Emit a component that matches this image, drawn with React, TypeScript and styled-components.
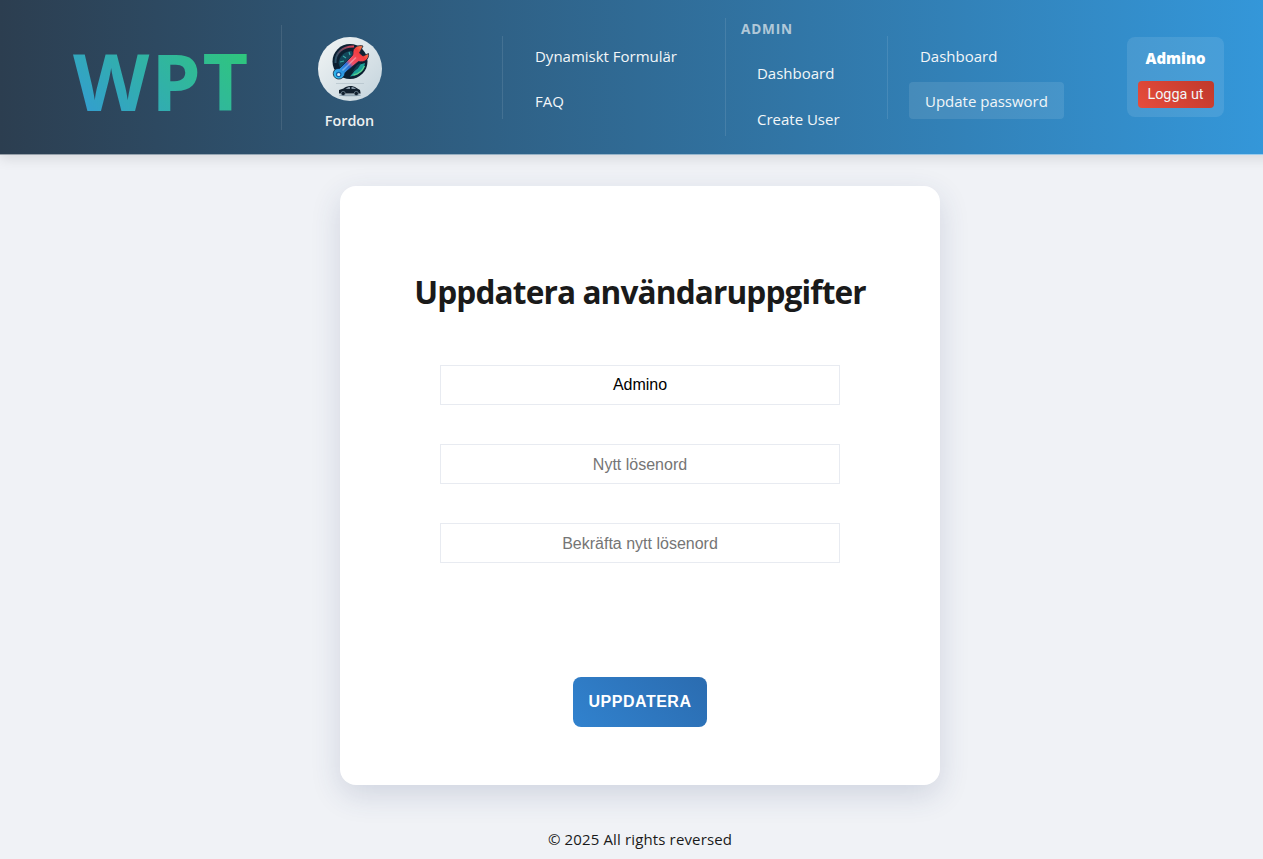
import React from 'react';
import styled, { createGlobalStyle } from 'styled-components';

const GlobalStyle = createGlobalStyle`
  * { box-sizing: border-box; }
  html { overflow: hidden; }
  body {
    margin: 0;
    background: #f0f2f6;
    color: #1a1a1a;
    font-family: 'Segoe UI', 'Open Sans', 'Noto Sans', sans-serif;
  }
`;

const Page = styled.div`
  width: 1280px;
  height: 859px;
  display: flex;
  flex-direction: column;
  align-items: center;
  overflow: hidden;
`;

const Header = styled.header`
  width: 100%;
  height: 155px;
  flex: none;
  display: flex;
  align-items: center;
  background: linear-gradient(90deg, #2c3e50, #3498db);
  border-bottom: 1px solid rgba(255, 255, 255, 0.5);
  box-shadow: 0 4px 12px rgba(0, 0, 0, 0.1);
`;

const Brand = styled.div`
  width: 281px;
  padding: 7px 0 0 73px;
`;

const Logo = styled.span`
  display: inline-block;
  background: linear-gradient(45deg, #3498db, #2ecc71);
  background-clip: text;
  -webkit-background-clip: text;
  color: transparent;
  font-size: 79px;
  font-weight: 700;
  line-height: 107px;
  letter-spacing: 1.8px;
`;

const Section = styled.nav<{ $width: number; $height: number }>`
  width: ${(p) => p.$width}px;
  height: ${(p) => p.$height}px;
  padding-left: 16px;
  border-left: 1px solid rgba(255, 255, 255, 0.1);
  display: flex;
  flex-direction: column;
  align-items: flex-start;
`;

const VehicleLink = styled.a`
  display: flex;
  flex-direction: column;
  align-items: center;
  width: 64px;
  margin: 12px 0 0 19.5px;
  color: #ecf0f1;
  font-size: 14.4px;
  font-weight: 600;
  line-height: 22px;
`;

const VehicleArt = styled.svg`
  width: 64px;
  height: 64px;
  margin-bottom: 9px;
  border-radius: 50%;
`;

const NavLink = styled.a<{ $active?: boolean }>`
  height: 37px;
  flex: none;
  padding: 0 16px;
  border-radius: 4px;
  margin-bottom: 8px;
  color: #f2f6f8;
  font-size: 15px;
  line-height: 39px;
  letter-spacing: -0.01px;
  white-space: nowrap;
  background: ${(p) => (p.$active ? 'rgba(255, 255, 255, 0.1)' : 'transparent')};
  transform: ${(p) => (p.$active ? 'translateX(5px)' : 'none')};
`;

const LinkList = styled.div`
  flex: none;
  padding-top: 1px;
  display: flex;
  flex-direction: column;
  align-items: flex-start;
`;

const SectionTitle = styled.span`
  height: 35px;
  flex: none;
  margin-left: -1px;
  color: rgba(236, 240, 241, 0.7);
  font-size: 13.6px;
  font-weight: 700;
  line-height: 22px;
  letter-spacing: 0.8px;
`;

const AdminList = styled(LinkList)`
  margin-left: -1px;
  gap: 1px;
`;

const UserPanel = styled.div`
  width: 97px;
  height: 80px;
  margin-left: 77px;
  padding-top: 10px;
  border-radius: 8px;
  background: rgba(255, 255, 255, 0.1);
  display: flex;
  flex-direction: column;
  align-items: center;
`;

const UserName = styled.strong`
  height: 34px;
  color: #fff;
  font-size: 15px;
  font-weight: 800;
  line-height: 23px;
`;

const LogoutButton = styled.button`
  width: 76px;
  height: 27px;
  padding: 0;
  border: 0;
  border-radius: 4px;
  background: linear-gradient(45deg, #e74c3c, #c0392b);
  color: #f2f6f8;
  font: 400 14.4px/27px Roboto, 'Liberation Sans', sans-serif;
`;

const Card = styled.main`
  width: 600px;
  height: 599px;
  flex: none;
  margin-top: 31px;
  padding-top: 79px;
  border-radius: 16px;
  background: #fff;
  box-shadow: 0 10px 30px rgba(45, 65, 110, 0.16);
  display: flex;
  flex-direction: column;
  align-items: center;
`;

const Title = styled.h1`
  margin: 0 0 46px;
  font-size: 31.6px;
  font-weight: 700;
  line-height: 54px;
  white-space: nowrap;
  letter-spacing: -0.88px;
`;

const Form = styled.form`
  width: 400px;
  display: flex;
  flex-direction: column;
  align-items: center;
  gap: 39px;
`;

const Field = styled.input`
  width: 400px;
  height: 40px;
  padding: 0;
  border: 1px solid #e8ebf1;
  background: #fff;
  color: #000;
  font: 16px 'Liberation Sans', Arial, sans-serif;
  text-align: center;
  &::placeholder { color: #757575; }
  &:not(:first-of-type) { padding-top: 1px; }
`;

const SubmitButton = styled.button`
  width: 134px;
  height: 50px;
  margin-top: 75px;
  padding: 0;
  border: 0;
  border-radius: 8px;
  background: linear-gradient(45deg, #3182ce, #2b6cb0);
  color: #fff;
  font: 700 16px 'Liberation Sans', Arial, sans-serif;
  letter-spacing: 0.5px;
`;

const Footer = styled.footer`
  margin-top: 42px;
  font-size: 15px;
  line-height: 24px;
  letter-spacing: 0.14px;
`;

const VehicleIcon = () => (
  <VehicleArt viewBox="0 0 64 64" aria-hidden="true">
    <defs>
      <linearGradient id="disc" x1="0" y1="0" x2="1" y2="1">
        <stop offset="0" stopColor="#f2f5f5" />
        <stop offset="1" stopColor="#c3d3dc" />
      </linearGradient>
      <linearGradient id="wrench" gradientUnits="userSpaceOnUse" x1="49" y1="11" x2="17" y2="42">
        <stop offset="0" stopColor="#ff9a4a" />
        <stop offset="0.2" stopColor="#f23c3e" />
        <stop offset="0.48" stopColor="#f0506a" />
        <stop offset="0.58" stopColor="#2b6ed6" />
        <stop offset="1" stopColor="#2fc4ee" />
      </linearGradient>
      <linearGradient id="rim" x1="0" y1="0" x2="1" y2="0">
        <stop offset="0" stopColor="#2b5268" />
        <stop offset="1" stopColor="#ef3f55" />
      </linearGradient>
    </defs>
    <rect width="64" height="64" fill="url(#disc)" />
    <circle cx="32" cy="24.5" r="17.5" fill="#0c2032" />
    <path d="M17.5 26C17 16 25 9 36 9.5" fill="none" stroke="url(#rim)" strokeWidth="2" />
    <path d="M20.5 26c1-7 6-12 13-12l3 3-14 15z" fill="#12475a" />
    <path d="M25 19l3 2M22 25l4-1M31 15l1 3" stroke="#3aa9a8" strokeWidth="1.2" />
    <path d="M47 26c-1 8-7 13-15 13.5 4-4 6-9 10-12z" fill="#1b9f97" />
    <path d="M43 26c-2 5-4 7-9 9l5-7z" fill="#123a50" />
    <path d="M46.5 29c-2 5-6 8-11 9" fill="none" stroke="#5bd08f" strokeWidth="1.3" />
    <path
      d="M45 9c-5-1.500-10.500 1.500-10 7 0 1.500-.5 2.500-1.500 3.500L21.500 31.500c-4-.500-7 2.500-6 6.500 1.200 5 8.500 5.500 10.800.5.700-2 .4-2.500 1.500-3.500L40.500 24.500c5.500 1.500 11-2 10-8l-5.500 2.500-3.500-3z"
      fill="url(#wrench)" stroke="#102238" strokeWidth="0.8" strokeLinejoin="round"
    />
    <path d="M24.5 33.5L38 20.5" stroke="#ffffff" strokeOpacity="0.35" strokeWidth="1.5" />
    <circle cx="20.7" cy="37.5" r="2.2" fill="#d9f0f8" stroke="#145da5" strokeWidth="1.2" />
    <path d="M18 46.5h28" stroke="#b2c0c9" strokeWidth="0.7" />
    <ellipse cx="32" cy="58.3" rx="11" ry="1" fill="#8ea2b0" />
    <path d="M21 56.500v-3.500l4.500-1.500c3-3 9-3.500 13-.5l3.500 2 .7 3.500z" fill="#111f2d" />
    <path d="M27.500 52l3-2h1.500v2zM33.500 50c2 0 3 .5 4.500 2h-4.500z" fill="#8495a4" />
    <circle cx="25.2" cy="56.5" r="2.1" fill="#111f2d" stroke="#8195a4" strokeWidth="0.7" />
    <circle cx="38.3" cy="56.5" r="2.1" fill="#111f2d" stroke="#8195a4" strokeWidth="0.7" />
  </VehicleArt>
);

export default function App() {
  return (
    <>
      <GlobalStyle />
      <Page>
        <Header>
          <Brand><Logo>WPT</Logo></Brand>
          <Section $width={221} $height={105}>
            <VehicleLink><VehicleIcon />Fordon</VehicleLink>
          </Section>
          <Section $width={223} $height={83}>
            <LinkList>
              <NavLink>Dynamiskt Formulär</NavLink>
              <NavLink>FAQ</NavLink>
            </LinkList>
          </Section>
          <Section $width={162} $height={118}>
            <SectionTitle>ADMIN</SectionTitle>
            <AdminList>
              <NavLink>Dashboard</NavLink>
              <NavLink>Create User</NavLink>
            </AdminList>
          </Section>
          <Section $width={163} $height={83}>
            <LinkList>
              <NavLink>Dashboard</NavLink>
              <NavLink $active>Update password</NavLink>
            </LinkList>
          </Section>
          <UserPanel>
            <UserName>Admino</UserName>
            <LogoutButton>Logga ut</LogoutButton>
          </UserPanel>
        </Header>
        <Card>
          <Title>Uppdatera användaruppgifter</Title>
          <Form>
            <Field defaultValue="Admino" />
            <Field type="password" placeholder="Nytt lösenord" />
            <Field type="password" placeholder="Bekräfta nytt lösenord" />
            <SubmitButton type="button">UPPDATERA</SubmitButton>
          </Form>
        </Card>
        <Footer>© 2025 All rights reversed</Footer>
      </Page>
    </>
  );
}
